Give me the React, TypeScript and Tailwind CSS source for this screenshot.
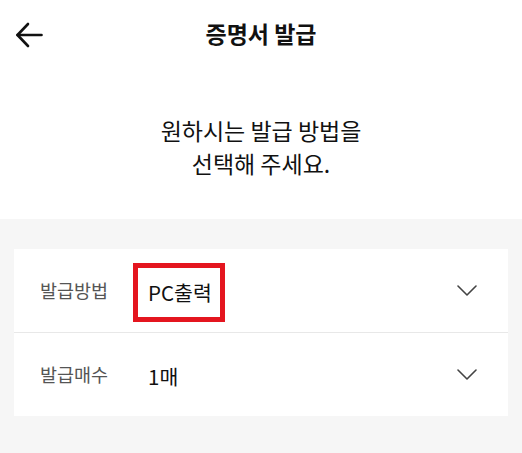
const font = { fontFamily: '"Noto Sans CJK KR", "Noto Sans", sans-serif' };

function BackArrow() {
  return (
    <svg width="28" height="26" viewBox="0 0 28 26" fill="none" stroke="#111" strokeWidth="2.6" strokeLinecap="round" strokeLinejoin="round">
      <path d="M26.5 13H2.5" />
      <path d="M13 2L2.5 13L13 24" />
    </svg>
  );
}

function Chevron() {
  return (
    <svg width="20" height="11" viewBox="0 0 20 11" fill="none" stroke="#444" strokeWidth="1.6" strokeLinecap="round" strokeLinejoin="round" className="ml-auto">
      <path d="M1 1L10 10L19 1" />
    </svg>
  );
}

export default function App() {
  return (
    <div className="w-[522px] h-[453px] bg-[#f6f6f6] text-[#111] flex flex-col" style={font}>
      {/* header + guide text */}
      <div className="bg-white h-[219px] flex flex-col shrink-0">
        <div className="relative h-[70px] flex items-center justify-center">
          <button className="absolute left-[15px] top-[22px]">
            <BackArrow />
          </button>
          <h1 className="text-[23px] font-bold leading-none mt-[-3px]">증명서 발급</h1>
        </div>
        <p className="pt-[44px] text-center text-[23px] leading-[33px]">
          원하시는 발급 방법을
          <br />
          선택해 주세요.
        </p>
      </div>

      {/* options */}
      <div className="pt-[30px] px-[14px]">
        <div className="bg-white">
          <div className="h-[84px] flex items-center pl-[26px] pr-[31px] border-b border-[#e8e8e8]">
            <span className="w-[93px] text-[18.5px] text-[#555]">발급방법</span>
            <span className="border-[5px] border-[#e4151f] h-[59px] pl-[10px] pr-[8px] flex items-center text-[20.5px] mt-[3px]">
              PC출력
            </span>
            <Chevron />
          </div>
          <div className="h-[83px] flex items-center pl-[26px] pr-[31px]">
            <span className="w-[93px] text-[18.5px] text-[#555]">발급매수</span>
            <span className="pl-[15px] text-[20.5px] mt-[3px]">1매</span>
            <Chevron />
          </div>
        </div>
      </div>
    </div>
  );
}
